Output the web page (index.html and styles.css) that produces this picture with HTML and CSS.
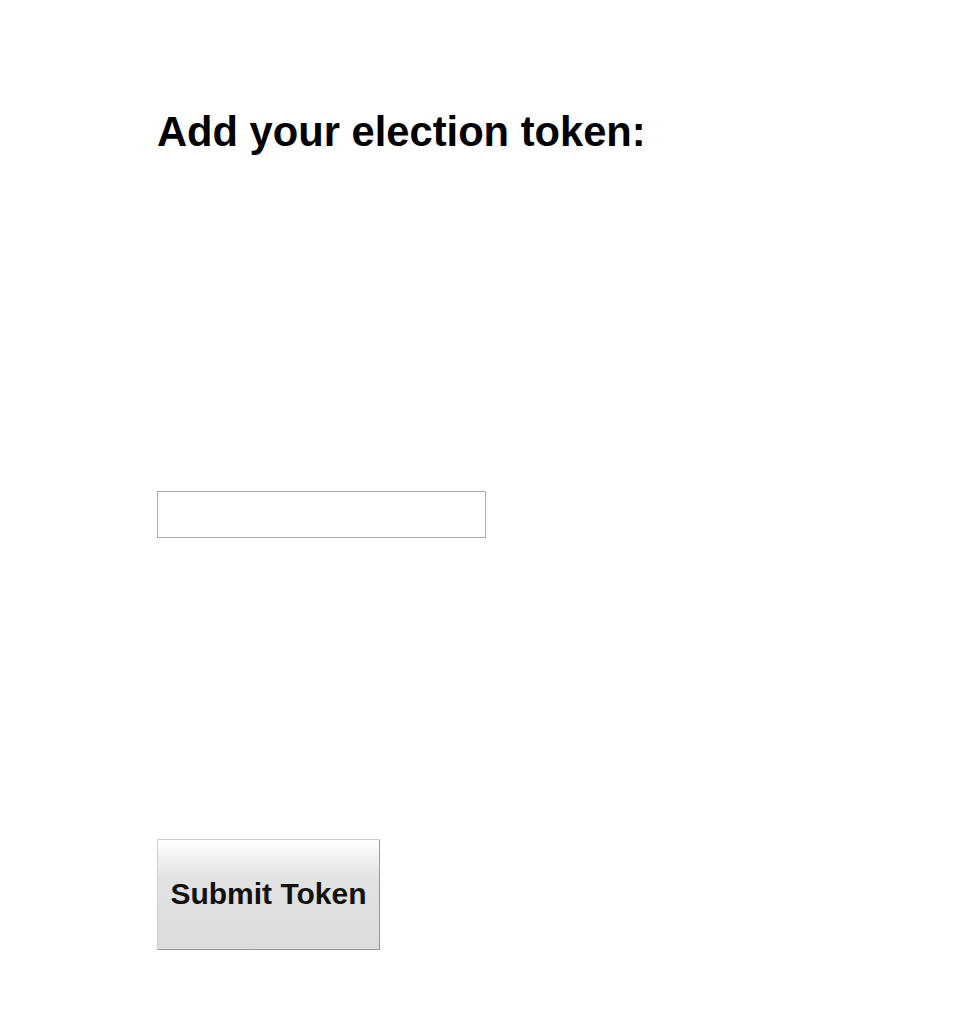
FILE: index.html
```html
<!DOCTYPE html>
<html>
<head>
<meta charset="utf-8">
<link rel="stylesheet" href="styles.css">
</head>
<body>
<main class="page">
  <h1 class="title">Add your election token:</h1>
  <form class="token-form">
    <input class="token-input" type="text">
    <button class="submit-btn" type="button">Submit Token</button>
  </form>
</main>
</body>
</html>
```
FILE: styles.css
```css
html, body {
  margin: 0;
  padding: 0;
  background: #fff;
}
.page {
  padding: 104px 0 0 157px;
  font-family: "Liberation Sans", Arial, sans-serif;
}
.title {
  margin: 0;
  font-size: 41.7px;
  font-weight: bold;
  line-height: 56px;
  color: #000;
}
.token-form {
  display: flex;
  flex-direction: column;
  align-items: flex-start;
}
.token-input {
  margin-top: 331px;
  box-sizing: border-box;
  width: 329px;
  height: 47px;
  border: 1px solid #aaa;
  padding: 0 8px;
  font-family: inherit;
  font-size: 18px;
  outline: none;
}
.submit-btn {
  margin-top: 301px;
  box-sizing: border-box;
  width: 223px;
  height: 111px;
  border: 1px solid;
  border-color: #d0d0d0 #999 #999 #d0d0d0;
  background: linear-gradient(to bottom, #fff 0%, #e2e2e2 35%, #dcdcdc 100%);
  font-family: inherit;
  font-size: 30px;
  font-weight: bold;
  color: #111;
  padding: 0 0 2px;
  cursor: pointer;
}
```
